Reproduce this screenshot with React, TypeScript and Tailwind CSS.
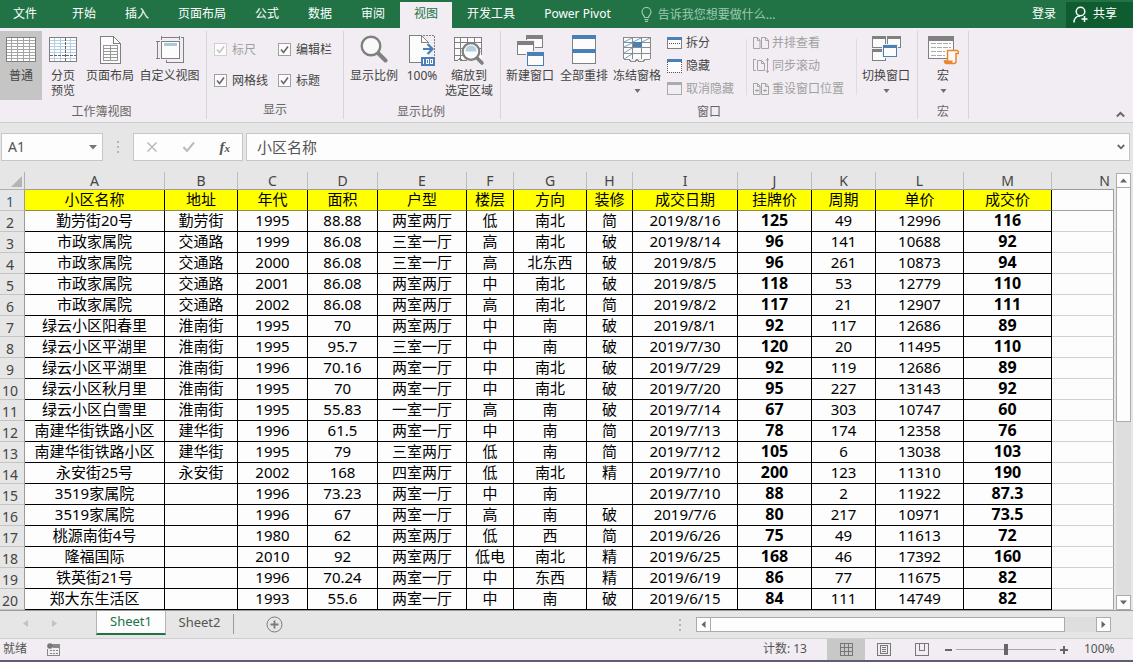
import React, { ReactNode } from "react";

const FONT = "font-['Noto_Sans','Noto_Sans_CJK_SC',sans-serif]";
const G = "#808080";
const B = "#4a80b5";

type SvgProps = { w: number; h: number; children: ReactNode; smooth?: boolean };

function Svg({ w, h, children, smooth }: SvgProps) {
  return (
    <svg
      width={w}
      height={h}
      viewBox={`0 0 ${w} ${h}`}
      fill="none"
      shapeRendering={smooth ? "auto" : "crispEdges"}
      aria-hidden="true"
      className="shrink-0"
    >
      {children}
    </svg>
  );
}

function Caret() {
  return (
    <Svg w={7} h={4} smooth>
      <path d="M0.5 0h6L3.5 4z" fill="#6f6f6f" />
    </Svg>
  );
}

function Window({ x, y, w, h, c, bar = 4 }: { x: number; y: number; w: number; h: number; c: string; bar?: number }) {
  return (
    <>
      <rect x={x + 0.5} y={y + 0.5} width={w - 1} height={h - 1} fill="#fdfcfd" stroke={c} />
      <rect x={x} y={y} width={w} height={bar} fill={c} />
    </>
  );
}

const NormalIcon = () => (
  <Svg w={30} h={31}>
    <rect x={0.5} y={2.5} width={29} height={24} fill="#fff" stroke={G} />
    <path d="M1 5.5h28M1 8.5h28M1 11.5h28M1 14.5h28M1 17.5h28M1 20.5h28M1 23.5h28M5.5 3v23M11.5 3v23M17.5 3v23M23.5 3v23" stroke="#a5a5a5" />
  </Svg>
);

const PageBreakIcon = () => (
  <Svg w={28} h={31}>
    <rect x={0.5} y={2.5} width={27} height={24} fill="#fff" stroke={G} />
    <path d="M1 5.5h26M1 8.5h26M1 11.5h26M1 14.5h26M1 17.5h26M1 23.5h26M5.5 3v23M11.5 3v23M21.5 3v23" stroke="#b5d0e4" />
    <path d="M16.5 3v23M1 20.5h26" stroke="#666" strokeDasharray="3 1" />
  </Svg>
);

const PageLayoutIcon = () => (
  <Svg w={21} h={31}>
    <path d="M0.5 1.5h13l7 7v20h-20z" fill="#fdfcfd" stroke={G} />
    <path d="M13.5 1.5v7h7" stroke={G} />
    <path d="M3.5 10.5h14v15h-14zM3.5 13.5h14M3.5 16.5h14M3.5 19.5h14M3.5 22.5h14M10.5 10v15" stroke="#999" />
  </Svg>
);

const CustomViewIcon = () => (
  <Svg w={28} h={31}>
    <rect x={5.5} y={6.5} width={18} height={17} fill="#fdfcfd" stroke={G} />
    <rect x={8} y={8} width={13} height={3} fill="#a9c8dd" />
    <path d="M5.5 1v4M23.5 1v4M6 2.5h17M0 6.5h4M0 23.5h4M1.5 7v16M25 2.5h2.5v25h-17V25" stroke={G} />
  </Svg>
);

const ZoomIcon = () => (
  <Svg w={28} h={31} smooth>
    <path d="M18 18l7.5 7.5" stroke={G} strokeWidth={4} strokeLinecap="round" />
    <circle cx={11} cy={11} r={9.3} fill="#faf9fa" stroke={G} strokeWidth={2.4} />
  </Svg>
);

const HundredIcon = () => (
  <Svg w={27} h={31}>
    <path d="M0.5 0.5h12l7 7v20h-19z" fill="#fdfcfd" />
    <path d="M12 27.5H0.5V0.5h12l7 7M12.5 1v6.500h7" stroke={G} />
    <path d="M14 0.500h11.500V21" stroke={G} strokeDasharray="2 1" />
    <g shapeRendering="auto">
      <path d="M14 14h9M18.500 9l5 5-5 5" stroke={B} strokeWidth={2.2} />
    </g>
    <rect x={12} y={22} width={14} height={9} fill={B} />
    <path d="M14.500 24v5M17.500 24.500h2v4h-2zM21.500 24.500h2v4h-2z" stroke="#fff" />
  </Svg>
);

const ZoomSelectionIcon = () => (
  <Svg w={31} h={31}>
    <path d="M0.500 2.500h27v21h-27z" fill="#fdfcfd" />
    <path d="M0.500 26V2.500h27V20M1 7.500h26M1 13.500h26M1 20.500h10M6.500 2v24M13.500 2v5M20.500 2v5" stroke={G} />
    <path d="M0.500 25.500h3l2-1.500 3 1.500h4" stroke={G} />
    <g shapeRendering="auto">
      <path d="M22 22l6 6" stroke={G} strokeWidth={3.6} strokeLinecap="round" />
      <circle cx={17} cy={16.500} r={8.300} fill="#fdfcfd" stroke={G} strokeWidth={2.200} />
      <path d="M11.500 16.500c0-4 2.500-6 5.500-6s5.500 2 5.500 6z" fill="#b3cfe0" />
    </g>
  </Svg>
);

const NewWindowIcon = () => (
  <Svg w={27} h={31}>
    <Window x={9} y={0} w={17} h={13} c={G} />
    <rect x={0} y={5} width={18} height={15} fill="#f1edf2" />
    <Window x={0} y={6} w={17} h={14} c={G} />
    <rect x={9} y={16} width={18} height={15} fill="#f1edf2" />
    <Window x={10} y={17} w={17} h={14} c={B} />
  </Svg>
);

const ArrangeIcon = () => (
  <Svg w={24} h={31}>
    <Window x={0} y={0} w={24} h={15} c={G} bar={0} />
    <Window x={0} y={14} w={24} h={15} c={G} bar={0} />
    <rect width={24} height={4} fill={B} />
    <rect y={14} width={24} height={4} fill={B} />
  </Svg>
);

const FreezeIcon = () => (
  <Svg w={28} h={31}>
    <path d="M0.500 2.500h27v21h-27z" fill="#fdfcfd" />
    <path d="M0.500 24V2.500h27V24M1 7.500h26M1 12.500h26M1 18.500h26M9.500 2v22M18.500 2v22M1 24.500h5l2 2h4l2-2 2 2h4l2-2h5" stroke="#8a8a8a" />
    <g shapeRendering="auto">
      <path d="M1 7l8-4M10 7l8-4M19 7l8-4M1 12l8-4M1 18l8-5M1 24l8-5" stroke="#6e9ec4" />
    </g>
    <rect x={10} y={7} width={9} height={5} fill={B} />
  </Svg>
);

const SwitchIcon = () => (
  <Svg w={29} h={31}>
    <Window x={0} y={1} w={14} h={12} c={G} bar={3} />
    <Window x={15} y={1} w={14} h={12} c={G} bar={3} />
    <Window x={0} y={14} w={14} h={12} c={G} bar={3} />
    <rect x={10} y={9} width={16} height={14} fill="#f1edf2" />
    <Window x={11} y={10} w={14} h={12} c={B} bar={3} />
  </Svg>
);

const MacroIcon = () => (
  <Svg w={31} h={31}>
    <Window x={0} y={1} w={26} h={23} c={G} bar={5} />
    <path d="M3 8.500h20M3 12.500h20M3 16.500h14M3 20.500h14" stroke="#aaa" strokeDasharray="5 1" />
    <g shapeRendering="auto">
      <path d="M19.500 26V15.500h9.500c1 0 1.500 1 1.500 3h-2.500v7.500c0 1.500-1 2.500-2 2.500h-7c-1.500 0-2.500-1-2.500-2.500z" fill="#fdf8f4" stroke="#e8872f" strokeWidth={1.500} />
      <path d="M16.500 25.500h8v3h-7z" fill="#e8872f" />
    </g>
  </Svg>
);

const SplitIcon = () => (
  <Svg w={15} h={12}>
    <Window x={0} y={0} w={15} h={12} c={G} bar={1} />
    <rect width={15} height={3} fill={B} />
    <path d="M2 6.500h11" stroke="#555" strokeDasharray="1 1" />
  </Svg>
);
const HideIcon = () => (
  <Svg w={15} h={14}>
    <rect width={15} height={13} fill="#fdfcfd" />
    <path d="M0.500 3v10.500h14V3" stroke="#555" strokeDasharray="1 1" />
    <rect width={15} height={3} fill={B} />
  </Svg>
);
const UnhideIcon = () => (
  <Svg w={15} h={13}>
    <rect x={0.500} y={0.500} width={14} height={12} stroke="#ababab" />
    <rect width={15} height={3} fill="#ababab" />
  </Svg>
);
const SideIcon = () => (
  <Svg w={16} h={12} smooth>
    <path d="M0.500 0.500h4l2.500 2.500v8.500h-6.500zM8.500 0.500h4l3 2.500v8.500h-7zM4.500 0.500v3h2.500M12.500 0.500v3h3" stroke="#a4a4a4" />
  </Svg>
);
const SyncIcon = () => (
  <Svg w={16} h={15} smooth>
    <path d="M3 1.500H0.500v11H3M4.500 2.500h4l3 3v7h-7zM8.500 2.500v3h3M14.500 0v15M13 2.500l1.500-2 1.500 2M13 12.500l1.500 2 1.500-2" stroke="#a4a4a4" />
  </Svg>
);
const ResetIcon = () => (
  <Svg w={16} h={12} smooth>
    <path d="M0.500 0.500h4l2.500 2.500v8.500h-6.500zM8.500 0.500h4l3 2.500v8.500h-7zM4.500 0.500v3h2.500M12.500 0.500v3h3M2 7.500h4M10 7.500h4M4 6v3M12 6v3" stroke="#a4a4a4" />
  </Svg>
);

function BigButton({ icon, lines, width, active, caret }: { icon: ReactNode; lines: string[]; width: string; active?: boolean; caret?: boolean }) {
  return (
    <button type="button" className={`flex h-[69px] shrink-0 flex-col items-center pt-1 ${width} ${active ? "bg-[#c5c5c5]" : ""}`}>
      <span className="flex h-[33px] justify-center">{icon}</span>
      {lines.map((l) => (
        <span key={l} className="whitespace-nowrap leading-[15px]">{l}</span>
      ))}
      {caret && <span className="mt-1.5"><Caret /></span>}
    </button>
  );
}

function SmallButton({ icon, text, disabled }: { icon: ReactNode; text: string; disabled?: boolean }) {
  return (
    <button type="button" disabled={disabled} className={`flex h-[23px] items-center gap-1 whitespace-nowrap ${disabled ? "text-[#a0a0a0]" : ""}`}>
      <span className="flex w-[15px]">{icon}</span>
      {text}
    </button>
  );
}

function Check({ text, disabled }: { text: string; disabled?: boolean }) {
  return (
    <label className={`flex items-center gap-[5px] whitespace-nowrap ${disabled ? "text-[#a0a0a0]" : ""}`}>
      <span className="grid">
        <input
          type="checkbox"
          defaultChecked
          disabled={disabled}
          className="peer col-start-1 row-start-1 size-[13px] appearance-none border border-[#a0a0a0] bg-[#fdfcfd] disabled:border-[#cfcfcf]"
        />
        <svg width="13" height="13" viewBox="0 0 13 13" className="pointer-events-none invisible col-start-1 row-start-1 text-[#666] peer-checked:visible peer-disabled:text-[#c4c4c4]" aria-hidden="true">
          <path d="M3 6.500l2.500 3L10 3.500" fill="none" stroke="currentColor" strokeWidth="1.600" />
        </svg>
      </span>
      {text}
    </label>
  );
}

function Group({ title, children, className = "" }: { title: string; children: ReactNode; className?: string }) {
  return (
    <section className={`my-[3px] flex shrink-0 flex-col border-r border-[#d6d6d8] ${className}`}>
      <div className="flex h-[69px]">{children}</div>
      <h2 className="pt-[3px] text-center leading-[18px] text-[#666]">{title}</h2>
    </section>
  );
}

const Divider = () => <div className="mt-2 h-14 w-px bg-[#dddde0]" />;

const TABS = ["开始", "插入", "页面布局", "公式", "数据", "审阅", "视图", "开发工具", "Power Pivot"];

function TitleBar() {
  return (
    <header className="flex h-7 items-stretch bg-[#217346] text-white">
      <button type="button" className="mr-2 w-[50px]">文件</button>
      <nav className="flex gap-px">
        {TABS.map((t) => (
          <button
            key={t}
            type="button"
            className={`whitespace-nowrap px-3.5 ${t === "视图" ? "mt-0.5 bg-[#f1edf2] pb-0.5 text-[#217346]" : ""}`}
          >
            {t}
          </button>
        ))}
      </nav>
      <label className="ml-4 flex flex-1 items-center gap-1.5 pt-px">
        <Svg w={11} h={15} smooth>
          <path d="M3.500 10.500c0-2-2.500-3-2.500-5.500a4.500 4.500 0 0 1 9 0c0 2.500-2.500 3.500-2.500 5.500zM3.500 12.500h4M4 14.300h3" stroke="#9fc9b0" strokeWidth={1.200} />
        </Svg>
        <input type="text" aria-label="告诉我您想要做什么" placeholder="告诉我您想要做什么..." className="w-40 bg-transparent outline-none placeholder:text-[#9fc9b0]" />
      </label>
      <button type="button" className="px-2.5">登录</button>
      <button type="button" className="mt-0.5 flex w-[67px] items-center gap-1 bg-[#0e5c2f] pb-0.5 pl-[7px]">
        <Svg w={16} h={17} smooth>
          <circle cx={7.500} cy={5.500} r={4.300} stroke="#fff" strokeWidth={1.500} />
          <path d="M1 16.500c0-4 2.500-6.500 6-6.500M8.500 13h6M11.500 10v6" stroke="#fff" strokeWidth={1.500} />
        </Svg>
        共享
      </button>
    </header>
  );
}

function Ribbon() {
  return (
    <div className="flex h-[95px] border-b border-[#cfcfd1] bg-[#f1edf2] text-[#444]">
      <Group title="工作簿视图" className="pr-[3px]">
        <BigButton icon={<NormalIcon />} lines={["普通"]} width="w-[42px]" active />
        <BigButton icon={<PageBreakIcon />} lines={["分页", "预览"]} width="w-[42px]" />
        <BigButton icon={<PageLayoutIcon />} lines={["页面布局"]} width="w-[52px]" />
        <BigButton icon={<CustomViewIcon />} lines={["自定义视图"]} width="w-[67px]" />
      </Group>
      <Group title="显示" className="w-[137px]">
        <div className="grid w-full grid-cols-[64px_1fr] grid-rows-[31px_31px] pl-[7px] pt-[3px]">
          <Check text="标尺" disabled />
          <Check text="编辑栏" />
          <Check text="网格线" />
          <Check text="标题" />
        </div>
      </Group>
      <Group title="显示比例" className="pl-[3px] pr-[5px]">
        <BigButton icon={<ZoomIcon />} lines={["显示比例"]} width="w-[54px]" />
        <BigButton icon={<HundredIcon />} lines={["100%"]} width="w-[42px]" />
        <BigButton icon={<ZoomSelectionIcon />} lines={["缩放到", "选定区域"]} width="w-[52px]" />
      </Group>
      <Group title="窗口" className="pl-0.5 pr-0.5">
        <BigButton icon={<NewWindowIcon />} lines={["新建窗口"]} width="w-[54px]" />
        <BigButton icon={<ArrangeIcon />} lines={["全部重排"]} width="w-[54px]" />
        <BigButton icon={<FreezeIcon />} lines={["冻结窗格"]} width="w-[52px]" caret />
        <div className="ml-1 mr-3">
          <SmallButton icon={<SplitIcon />} text="拆分" />
          <SmallButton icon={<HideIcon />} text="隐藏" />
          <SmallButton icon={<UnhideIcon />} text="取消隐藏" disabled />
        </div>
        <Divider />
        <div className="ml-1.5 mr-3">
          <SmallButton icon={<SideIcon />} text="并排查看" disabled />
          <SmallButton icon={<SyncIcon />} text="同步滚动" disabled />
          <SmallButton icon={<ResetIcon />} text="重设窗口位置" disabled />
        </div>
        <Divider />
        <BigButton icon={<SwitchIcon />} lines={["切换窗口"]} width="w-[58px]" caret />
      </Group>
      <Group title="宏">
        <BigButton icon={<MacroIcon />} lines={["宏"]} width="w-[50px]" caret />
      </Group>
      <button type="button" aria-label="折叠功能区" className="mb-1 ml-auto mr-2 self-end">
        <Svg w={9} h={7} smooth>
          <path d="M0.800 5.500L4.500 2l3.700 3.500" stroke="#6a6a6a" strokeWidth={2} />
        </Svg>
      </button>
    </div>
  );
}

function FormulaBar() {
  return (
    <div className="flex h-[49px] items-start bg-[#e6e6e6] pl-px pr-[3px] pt-2.5 text-[#555]">
      <div className="flex h-7 w-[102px] items-center border border-[#c6c6c6] bg-[#fdfdfd] pl-1.5 pr-1">
        <input aria-label="名称框" defaultValue="A1" className="min-w-0 flex-1 bg-transparent text-sm outline-none" />
        <button type="button" aria-label="名称列表" className="p-px">
          <Svg w={8} h={5} smooth><path d="M0 0h8L4 4.500z" fill="#777" /></Svg>
        </button>
      </div>
      <div className="flex h-7 w-[30px] items-center justify-center">
        <Svg w={2} h={12}><path d="M0 1h2M0 6h2M0 11h2" stroke="#b5b5b5" strokeWidth={2} /></Svg>
      </div>
      <div className="flex h-7 w-[110px] items-center justify-around border border-[#c6c6c6] bg-[#fdfdfd]">
        <button type="button" aria-label="取消">
          <Svg w={12} h={12} smooth><path d="M1.500 1.500l9 9M10.500 1.500l-9 9" stroke="#bbb" strokeWidth={1.500} /></Svg>
        </button>
        <button type="button" aria-label="输入">
          <Svg w={14} h={12} smooth><path d="M1.500 6l3.500 4 7-8.500" stroke="#bbb" strokeWidth={2} /></Svg>
        </button>
        <button type="button" aria-label="插入函数" className="font-['Liberation_Serif',serif] text-[15px] font-bold italic leading-4">
          f<span className="text-[11px]">x</span>
        </button>
      </div>
      <div className="ml-[3px] flex h-7 flex-1 items-center border border-[#c6c6c6] bg-[#fdfdfd] pl-2.5 pr-1">
        <input aria-label="编辑栏" defaultValue="小区名称" className="min-w-0 flex-1 bg-transparent text-[15px] outline-none" />
        <button type="button" aria-label="展开编辑栏">
          <Svg w={8} h={6} smooth><path d="M0.800 1L4 4.300 7.200 1" stroke="#666" strokeWidth={1.800} /></Svg>
        </button>
      </div>
    </div>
  );
}

const COLS = ["A", "B", "C", "D", "E", "F", "G", "H", "I", "J", "K", "L", "M"];
const WIDTHS = [140, 73, 70, 70, 89, 47, 73, 46, 105, 74, 64, 88, 88];
const HEAD = ["小区名称", "地址", "年代", "面积", "户型", "楼层", "方向", "装修", "成交日期", "挂牌价", "周期", "单价", "成交价"];
const ROWS = `勤劳街20号,勤劳街,1995,88.88,两室两厅,低,南北,简,2019/8/16,125,49,12996,116
市政家属院,交通路,1999,86.08,三室一厅,高,南北,破,2019/8/14,96,141,10688,92
市政家属院,交通路,2000,86.08,三室一厅,高,北东西,破,2019/8/5,96,261,10873,94
市政家属院,交通路,2001,86.08,两室两厅,中,南北,破,2019/8/5,118,53,12779,110
市政家属院,交通路,2002,86.08,两室两厅,高,南北,简,2019/8/2,117,21,12907,111
绿云小区阳春里,淮南街,1995,70,两室两厅,中,南,破,2019/8/1,92,117,12686,89
绿云小区平湖里,淮南街,1995,95.7,三室一厅,中,南,破,2019/7/30,120,20,11495,110
绿云小区平湖里,淮南街,1996,70.16,两室一厅,中,南北,破,2019/7/29,92,119,12686,89
绿云小区秋月里,淮南街,1995,70,两室一厅,中,南北,破,2019/7/20,95,227,13143,92
绿云小区白雪里,淮南街,1995,55.83,一室一厅,高,南,破,2019/7/14,67,303,10747,60
南建华街铁路小区,建华街,1996,61.5,两室一厅,中,南,简,2019/7/13,78,174,12358,76
南建华街铁路小区,建华街,1995,79,三室两厅,低,南,简,2019/7/12,105,6,13038,103
永安街25号,永安街,2002,168,四室两厅,低,南北,精,2019/7/10,200,123,11310,190
3519家属院,,1996,73.23,两室一厅,中,南,,2019/7/10,88,2,11922,87.3
3519家属院,,1996,67,两室一厅,高,南,破,2019/7/6,80,217,10971,73.5
桃源南街4号,,1980,62,两室两厅,低,西,简,2019/6/26,75,49,11613,72
隆福国际,,2010,92,两室两厅,低电,南北,精,2019/6/25,168,46,17392,160
铁英街21号,,1996,70.24,两室一厅,中,东西,精,2019/6/19,86,77,11675,82
郑大东生活区,,1993,55.6,两室一厅,中,南,破,2019/6/15,84,111,14749,82`
  .split("\n")
  .map((r) => r.split(","));

function RowNumber({ n }: { n: number }) {
  return (
    <th scope="row" className={`h-[21px] border-b border-r border-b-[#c4c4c4] border-r-[#9b9b9b] bg-[#e6e6e6] p-0 pr-1 pt-1 text-center text-sm font-normal leading-4 ${n === 1 ? "text-[#2f5c85]" : "text-[#444]"}`}>
      {n}
    </th>
  );
}

function Sheet() {
  return (
    <table className="min-w-0 flex-1 table-fixed border-separate border-spacing-0 text-[15px] text-black">
      <colgroup>
        <col style={{ width: 25 }} />
        {WIDTHS.map((w, i) => <col key={COLS[i]} style={{ width: w }} />)}
        <col />
      </colgroup>
      <thead>
        <tr className="bg-[#e6e6e6] text-sm text-[#444]">
          <td className="h-[18px] border-b border-r border-[#b0b0b0] p-0 align-bottom">
            <span className="mb-0.5 mr-0.5 flex justify-end">
              <Svg w={11} h={11} smooth><path d="M11 0v11H0z" fill="#b4b4b4" /></Svg>
            </span>
          </td>
          {COLS.map((c) => (
            <th key={c} scope="col" className="h-[18px] border-b border-r border-b-[#9b9b9b] border-r-[#bdbdbd] p-0 font-normal leading-[17px]">{c}</th>
          ))}
          <th scope="col" className="h-[18px] border-b border-[#9b9b9b] p-0 pr-1 text-right font-normal leading-[17px]">N</th>
        </tr>
      </thead>
      <tbody>
        <tr>
          <RowNumber n={1} />
          {HEAD.map((h) => (
            <td key={h} className="h-[21px] border-b border-r border-b-[#8c8c50] border-r-black bg-[#ffff00] p-0 text-center align-top leading-[18px]">{h}</td>
          ))}
          <td className="border-b border-r border-[#a0a0a0] bg-[#fdfdfd] p-0" />
        </tr>
        {ROWS.map((r, i) => (
          <tr key={i}>
            <RowNumber n={i + 2} />
            {r.map((v, j) => (
              <td key={j} className={`h-[21px] border-b border-r border-black bg-[#fdfdfd] p-0 text-center align-top leading-[18px] ${j === 9 || j === 12 ? "text-base/[18px] font-bold" : ""}`}>{v}</td>
            ))}
            <td className="border-b border-r border-b-[#d0d0d0] border-r-[#a0a0a0] bg-[#fdfdfd] p-0" />
          </tr>
        ))}
      </tbody>
    </table>
  );
}

function ArrowButton({ label, d }: { label: string; d: string }) {
  return (
    <button type="button" aria-label={label} className="flex size-[15px] shrink-0 items-center justify-center border border-[#ababab] bg-[#fdfdfd]">
      <Svg w={7} h={7} smooth><path d={d} fill="#666" /></Svg>
    </button>
  );
}

function SheetTabs() {
  return (
    <div className="flex h-7 items-start border-t border-[#9b9b9b] bg-[#e6e6e6] text-[13px] text-[#555]">
      <div className="flex h-[25px] w-24 items-center gap-6 pl-[23px]">
        <button type="button" aria-label="上一个工作表"><Svg w={5} h={7} smooth><path d="M5 0v7L0 3.500z" fill="#c2c2c2" /></Svg></button>
        <button type="button" aria-label="下一个工作表"><Svg w={5} h={7} smooth><path d="M0 0v7l5-3.500z" fill="#c2c2c2" /></Svg></button>
      </div>
      <button type="button" className="h-6 w-[70px] border-x border-b-2 border-x-[#b5b5b5] border-b-[#217346] bg-[#fdfdfd] text-[#217346]">Sheet1</button>
      <button type="button" className="h-6 w-[67px]">Sheet2</button>
      <div className="mt-[3px] h-5 w-px bg-[#9b9b9b]" />
      <button type="button" aria-label="新工作表" className="ml-8 mt-[5px]">
        <Svg w={17} h={17} smooth>
          <circle cx={8.500} cy={8.500} r={7.500} stroke="#7a7a7a" />
          <path d="M8.500 4.500v8M4.500 8.500h8" stroke="#7a7a7a" strokeWidth={1.800} />
        </Svg>
      </button>
      <div className="ml-auto flex h-7 items-center pb-px pr-[22px]">
        <Svg w={2} h={12}><path d="M0 1h2M0 6h2M0 11h2" stroke="#b5b5b5" strokeWidth={2} /></Svg>
        <div className="ml-[15px] flex w-[415px] bg-[#dedede]">
          <ArrowButton label="向左滚动" d="M5.500 0v7L1.500 3.500z" />
          <div className="mr-[31px] h-[15px] flex-1 border border-l-0 border-[#ababab] bg-[#fdfdfd]" />
          <ArrowButton label="向右滚动" d="M1.500 0v7l4-3.500z" />
        </div>
      </div>
    </div>
  );
}

function StatusBar() {
  return (
    <footer className="flex h-[22px] items-stretch border-t border-[#cfcfd1] bg-[#f1edf2] leading-[19px] text-[#555]">
      <span className="pl-[3px]">就绪</span>
      <button type="button" aria-label="录制宏" className="ml-5 flex items-center">
        <Svg w={13} h={13}>
          <path d="M5 1h8v3H6zM0.500 6v6.500h12V3" stroke="#888" />
          <rect x={6} y={1} width={7} height={3} fill="#888" />
          <path d="M3 7.500h8M3 10.500h8" stroke="#888" strokeDasharray="2 1" />
          <circle cx={3} cy={3} r={2.800} fill="#777" shapeRendering="auto" />
        </Svg>
      </button>
      <span className="ml-auto mr-5">计数: 13</span>
      <button type="button" aria-label="普通视图" className="flex w-[38px] items-center justify-center bg-[#c8c8c8]">
        <Svg w={13} h={13}><path d="M0.500 0.500h12v12h-12zM1 4.500h12M1 8.500h12M4.500 1v12M8.500 1v12" stroke="#777" /></Svg>
      </button>
      <button type="button" aria-label="页面布局视图" className="flex w-[38px] items-center justify-center">
        <Svg w={14} h={13}><path d="M0.500 0.500h13v12h-13zM3.500 2.500h7v8h-7zM5 4.500h4M5 6.500h4M5 8.500h4" stroke="#777" /></Svg>
      </button>
      <button type="button" aria-label="分页预览视图" className="flex w-[38px] items-center justify-center">
        <Svg w={14} h={13}><path d="M0.500 0.500h13v12h-13zM4.500 1v6M9.500 1v6M4 7.500h6" stroke="#777" /></Svg>
      </button>
      <button type="button" aria-label="缩小" className="ml-1 flex items-center">
        <Svg w={7} h={2}><path d="M0 1h7" stroke="#666" strokeWidth={2} /></Svg>
      </button>
      <input
        type="range"
        aria-label="缩放级别"
        min={0}
        max={100}
        defaultValue={50}
        className="mx-1 w-[100px] appearance-none bg-transparent [&::-webkit-slider-runnable-track]:h-px [&::-webkit-slider-runnable-track]:bg-[#a8a8a8] [&::-webkit-slider-thumb]:mt-[-5px] [&::-webkit-slider-thumb]:h-[11px] [&::-webkit-slider-thumb]:w-1 [&::-webkit-slider-thumb]:appearance-none [&::-webkit-slider-thumb]:bg-[#666]"
      />
      <button type="button" aria-label="放大" className="flex items-center">
        <Svg w={8} h={8}><path d="M0 4h8M4 0v8" stroke="#666" strokeWidth={2} /></Svg>
      </button>
      <span className="ml-4 w-[49px]">100%</span>
    </footer>
  );
}

export default function App() {
  return (
    <div className={`flex min-h-screen flex-col bg-[#5f5c74] text-xs ${FONT}`}>
      <TitleBar />
      <Ribbon />
      <FormulaBar />
      <main className="flex bg-[#e6e6e6]">
        <Sheet />
        <div className="flex w-[19px] flex-col items-center pt-px">
          <ArrowButton label="向上滚动" d="M0 5.500h7L3.500 1.500z" />
          <div className="flex w-[15px] flex-1 flex-col bg-[#dedede]">
            <div className="h-[234px] border border-t-0 border-[#ababab] bg-[#fdfdfd]" />
          </div>
          <ArrowButton label="向下滚动" d="M0 1.500h7L3.500 5.500z" />
        </div>
      </main>
      <SheetTabs />
      <StatusBar />
    </div>
  );
}
